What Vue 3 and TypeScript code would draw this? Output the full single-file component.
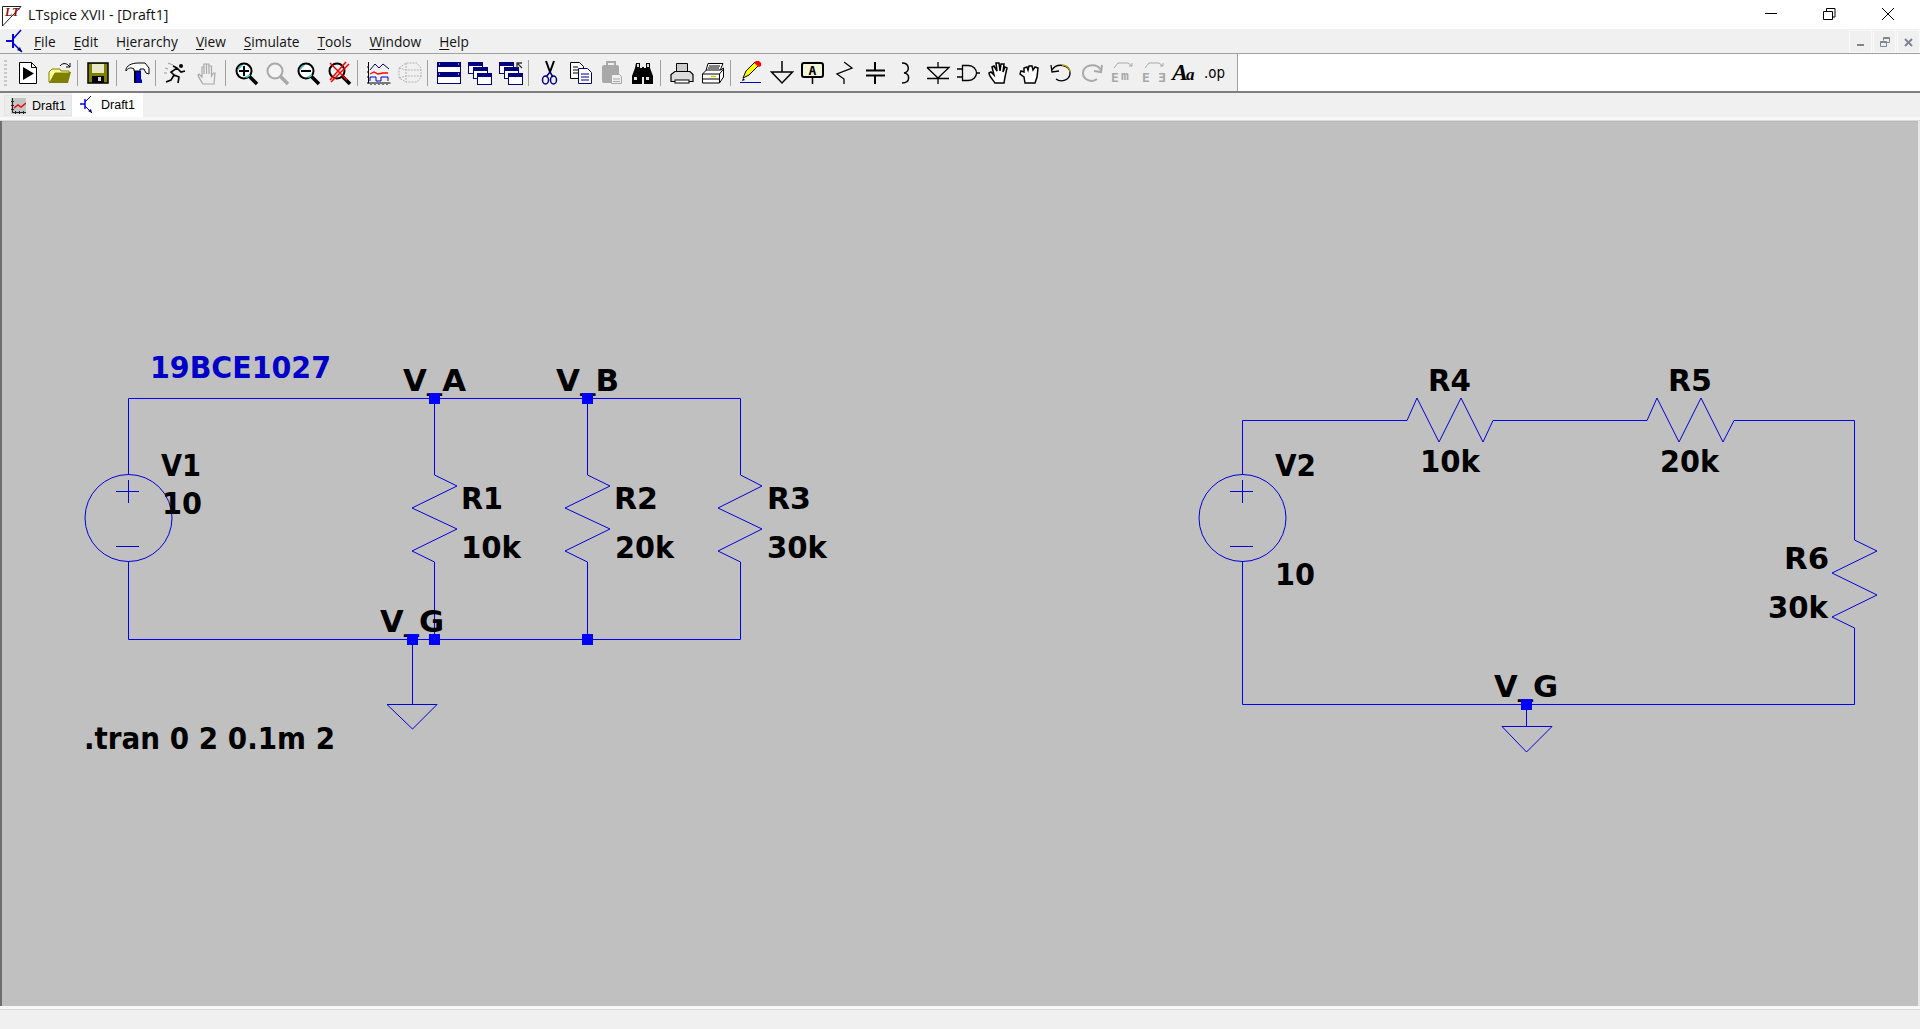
<script setup lang="ts">
interface ToolItem {
  sep?: boolean
  narrow?: boolean
  body?: string
}

interface SchematicLabel {
  text: string
  x: number
  y: number
  w: number
  color?: string
}

const menus = [
  { before: '', key: 'F', after: 'ile' },
  { before: '', key: 'E', after: 'dit' },
  { before: 'H', key: 'i', after: 'erarchy' },
  { before: '', key: 'V', after: 'iew' },
  { before: '', key: 'S', after: 'imulate' },
  { before: '', key: 'T', after: 'ools' },
  { before: '', key: 'W', after: 'indow' },
  { before: '', key: 'H', after: 'elp' },
]

const lens = (stroke: string, fill: string, extra = '') =>
  `<path d="M14 15l8 8" stroke="${stroke}" stroke-width="3.5"/><circle cx="9" cy="10" r="7.5" fill="${fill}" stroke="${stroke}" stroke-width="2"/>${extra}`

const win = (x: number, y: number, w = 14, h = 11) =>
  `<rect x="${x + 0.5}" y="${y + 0.5}" width="${w}" height="${h}" fill="#fff" stroke="#000080"/><rect x="${x}" y="${y}" width="${w + 1}" height="4" fill="#000080"/>`

const line = 'fill="none" stroke="#000"'
const mono = `font-weight="700" fill="#a8a8a8" font-family="'DejaVu Sans Mono',monospace"`

const toolItems: ToolItem[] = [
  { body: `<g transform="translate(-1 0)"><path d="M3.500 1.500h12l5 5v16h-17z" fill="#fff" stroke="#000"/><path d="M15.500 1.500v5h5" ${line}/><path d="M7 6l11 6.500-11 6.500z"/></g>` },
  { body: `<path d="M1 10h3l1-2h7v3h11l-3 11H1z" fill="#808000"/><path d="M1 21V11l3-3h8l1 2h8l0 2H7L2 21z" fill="#ffff99" stroke="#808000"/><path d="M12 5c2-3 6-3 8-1l2 2m0-4v4h-4" ${line}/>` },
  { sep: true },
  { body: `<g transform="translate(-1 0)"><rect x="2" y="2" width="20" height="20" fill="#808000" stroke="#000" stroke-width="1.500"/><rect x="6" y="3" width="12" height="9" fill="#e8e8c8"/><rect x="6" y="15" width="12" height="7"/><rect x="12" y="16" width="3" height="4" fill="#d0d0d0"/></g>` },
  { sep: true },
  { body: `<g transform="translate(-1 0)"><path d="M10 10h6v8l1 1v3H9v-3l1-1z" fill="#0000c0"/><rect x="9" y="10" width="2" height="12"/><path d="M1 8C3 3 9 2 14 2h6l4 5v6l-3-1-2-4h-4v2H9V8C6 6 3 7 1 10z" fill="#fff" stroke="#000"/></g>` },
  { sep: true },
  { body: `<g transform="translate(-2 0)"><circle cx="18" cy="5" r="2"/><path d="M3 21l5-2 3-5-3-3 6-4 4 4 4-1M11 14l5 2-1 6M14 7l-4-2" fill="none" stroke="#000" stroke-width="1.600"/><path d="M5 2l5 2M2 7l3 1M1 12h3" fill="none" stroke="#999"/></g>` },
  { body: `<path d="M7 23c-2-3-4-6-5-9l1-1 3 3V6h2v7V3h2.500v10V3H13v10V5h2.500v10l2-3h1.500l-1 11z" fill="#f0f0f0" stroke="#a8a8a8" stroke-width="1.200"/>` },
  { sep: true },
  { body: lens('#000', '#fff', `<path d="M3 7l3-3 2 0-5 5zM10 16l5-3 0 2-3 2z" fill="#33cccc"/><path d="M9 5v10M4 10h10" stroke="#000" stroke-width="2"/>`) },
  { body: lens('#a8a8a8', '#f4f4f4') },
  { body: lens('#000', '#fff', `<path d="M3 7l3-3 2 0-5 5zM10 16l5-3 0 2-3 2z" fill="#33cccc"/><path d="M4 10h10" stroke="#000" stroke-width="2"/>`) },
  { body: lens('#000', '#e8f8f8', `<path d="M2 2l17 17M18 1L2 19M3 21L21 3" stroke="#f00" stroke-width="1.500"/>`) },
  { sep: true },
  { body: `<path d="M1.500 1v21h22M0 22h2M4 23v1M8 23v1M12 23v1M16 23v1M20 23v1M0 6h2M0 11h2M0 16h2" ${line}/><path d="M3 9l5-6 4 4 4-4 6 5" fill="none" stroke="#000080"/><path d="M3 13l4-2 4 2 5-1 5 0" fill="none" stroke="#f00" stroke-width="1.300"/><path d="M3 20v-4h6v4h5v-4h7v4" fill="none" stroke="#0000c0"/>` },
  { body: `<path d="M1 7l7-5h11l4 5v9l-4 5H8l-7-4zM8 2v19M1 7l7 2h15M1 17l7-2h15" fill="none" stroke="#b4b4b4" stroke-dasharray="2 1"/>` },
  { sep: true },
  { body: `<rect x="0.500" y="1.500" width="23" height="21" fill="#fff" stroke="#000080" stroke-width="1"/><rect x="0" y="1" width="24" height="5" fill="#000080"/><rect x="0" y="11" width="24" height="5" fill="#000080"/><path d="M2 3h1M21 3h1M2 13h1M21 13h1" stroke="#fff"/>` },
  { body: win(0, 1) + win(5, 6) + win(9, 12) },
  { body: win(0, 1) + win(5, 6) + win(9, 12) + `<path d="M18 7V2h5M18 2l5 5" fill="none" stroke="#333" stroke-width="1.300"/>` },
  { sep: true },
  { body: `<path d="M8 0l4 11M16 0l-4 11" stroke="#000" stroke-width="2"/><path d="M12 11l-4 5M12 11l3 5" stroke="#000080" stroke-width="1.500"/><ellipse cx="7.500" cy="19" rx="3" ry="4" fill="none" stroke="#000080" stroke-width="1.500"/><ellipse cx="15.500" cy="19" rx="3" ry="4" fill="none" stroke="#000080" stroke-width="1.500"/>` },
  { body: `<path d="M1.500 1.500h9l4 4v12h-13z" fill="#fff" stroke="#000"/><path d="M4 6h5M4 9h7M4 12h7" stroke="#000"/><path d="M9.500 7.500h9l4 4v11h-13z" fill="#fff" stroke="#000080"/><path d="M12 13h8M12 16h8M12 19h8" stroke="#000080"/>` },
  { body: `<rect x="2" y="4" width="17" height="18" rx="2" fill="#a8a8a8"/><rect x="7" y="1" width="8" height="5" fill="none" stroke="#a8a8a8" stroke-width="2"/><path d="M11.500 13.500h8l2 2v7h-10z" fill="#f0f0f0" stroke="#a8a8a8"/><path d="M13 18h7M13 20.500h7" stroke="#a8a8a8"/>` },
  { body: `<path d="M5 2h4v5h2v-1h2v1h2V2h4v5l3 8v8h-9v-7H11v7H1v-8l3-8z"/><path d="M6 3h2v3H6zM16 3h2v3h-2zM3 16h3v3H3zM15 16h3v3h-3z" fill="#e0e0e0"/>` },
  { sep: true },
  { body: `<path d="M6.500 2.500h11v8h-11z" fill="#ccc" stroke="#000"/><path d="M5 10.500h15l3 3v7H1v-7z" fill="#ddd" stroke="#000" stroke-width="1.200"/><rect x="5" y="19" width="14" height="3" fill="#fff" stroke="#000"/>` },
  { body: `<path d="M7 2.500h15l-3 7H5z" fill="#fff" stroke="#000"/><path d="M8 5h11M7 7h11" stroke="#000"/><path d="M1.500 13l4-4h14l3-2v9l-4 6h-17z" fill="#fff" stroke="#000"/><path d="M1.500 13h17v9M1.500 18h17M18.500 13l4-5" ${line}/><path d="M10 15.500h5" stroke="#cc0" stroke-width="1.500"/>` },
  { sep: true },
  { narrow: true, body: `<path d="M4 17l3-7 9-9 4 3-10 10z" fill="#ffff00" stroke="#000"/><path d="M15 2l2-2h3l2 2v3l-2 1z" fill="#f00"/><path d="M4 17l-1 3 3-1z"/><path d="M1 21.500h21" stroke="#0000c0"/>` },
  { body: `<path d="M12 0v11M1.500 11h21L12 22z" fill="none" stroke="#000" stroke-width="1.500"/>` },
  { body: `<rect x="1" y="2" width="21" height="14" rx="2" fill="#f4f4d8" stroke="#000" stroke-width="2"/><text x="11.500" y="13.500" font-size="13" font-weight="700" text-anchor="middle" font-family="'DejaVu Sans Mono',monospace">A</text><path d="M11.500 16v7" stroke="#000" stroke-width="1.500"/>` },
  { body: `<path d="M12 1l8 6-15 6 7 5v5" fill="none" stroke="#000" stroke-width="1.300"/>` },
  { body: `<path d="M12 1v8M3 9.500h19M3 14.500h19M12 15v8" fill="none" stroke="#000" stroke-width="2"/>` },
  { body: `<path d="M8 2c8 0 8 9 2 10 6 0 7 10-2 10" fill="none" stroke="#000" stroke-width="1.500"/>` },
  { body: `<path d="M13 1v5M2 6.500h22L13 17 2 6.500M2 17.500h22M13 18v5" fill="none" stroke="#000" stroke-width="1.300"/>` },
  { body: `<path d="M6.500 4.500h6c5 0 8 4 8 7.500s-3 7.500-8 7.500h-6zM1 8h5M1 16h5M20 12h4" fill="none" stroke="#000" stroke-width="1.300"/>` },
  { body: `<path d="M8 22c-2-3-6-7-6-10l2-1 3 3-2-8 2-1 3 5-1-8h3l1 8 1-7h3l-1 8 2-5 2 1-2 9-1 6z" fill="#fff" stroke="#000" stroke-width="1.500"/>` },
  { body: `<path d="M7 22l-1-6-4-3 1-3 3 1 0-4 3-1 1 3 1-4 3 0 1 4 2-3 3 1-1 9-2 6z" fill="#fff" stroke="#000" stroke-width="1.500"/>` },
  { body: `<path d="M3 9c5-8 18-5 18 3 0 7-9 10-14 6" fill="none" stroke="#000" stroke-width="1.300"/><path d="M13 4c5 0 8 4 8 7" fill="none" stroke="#b8a000" stroke-width="1.300"/><path d="M2 4l1 7 7-1" fill="none" stroke="#000" stroke-width="1.300"/>` },
  { body: `<path d="M21 9C16 1 3 4 3 12c0 7 9 10 14 6" fill="none" stroke="#a8a8a8" stroke-width="2"/><path d="M22 4l-1 7-7-1" fill="none" stroke="#a8a8a8" stroke-width="2"/>` },
  { body: `<text x="0" y="20.500" font-size="13" ${mono}>E</text><text x="10" y="19" font-size="13" ${mono}>m</text><path d="M3 7l4-5h10l4 3M21 2v3h-3" fill="none" stroke="#a8a8a8"/>` },
  { body: `<text x="0" y="20.500" font-size="13" ${mono}>E</text><text x="-24" y="20.500" transform="scale(-1 1)" font-size="13" ${mono}>E</text><path d="M3 7l4-5h10l4 3M21 2v3h-3" fill="none" stroke="#a8a8a8"/>` },
  { body: `<text x="-1" y="19" font-size="24" font-weight="700" font-style="italic" font-family="'Liberation Serif',serif">A</text><text x="13" y="19" font-size="17" font-style="italic" font-family="'Liberation Serif',serif" font-weight="700">a</text>` },
  { body: `<text x="0" y="17" font-size="16" font-family="'DejaVu Sans',sans-serif" textLength="21" lengthAdjust="spacingAndGlyphs">.op</text>` },
]

const wires = [
  'M128.500 475V398.500H740.500V475',
  'M128.500 561V639.500H740.500V562',
  'M434.500 398V475M434.500 562V639',
  'M587.500 398V475M587.500 562V639',
  'M412.500 639V704',
  'M1407 420.500H1242.500V475M1242.500 561V704.500H1854.500V628',
  'M1493 420.500H1647M1734 420.500H1854.500V540',
  'M1526.500 704V726',
]

const symbols = [
  'M434.500 475L457 486 412 508 457 529 412 551 434.500 562',
  'M587.500 475L610 486 565 508 610 529 565 551 587.500 562',
  'M740.500 475L762 486 718 508 762 529 718 551 740.500 562',
  'M1407 420.500L1417 398 1439 442 1461 398 1483 442 1493 420.500',
  'M1647 420.500L1657 398 1679 442 1701 398 1723 442 1734 420.500',
  'M1854.500 540L1877 551 1832 573 1877 595 1832 617 1854.500 628',
  'M387 704.500H437L412.500 729Z',
  'M1502 726.500H1552L1526.500 752Z',
  'M116 491.500H139M128.500 480V503M116 546.500H139',
  'M1230 491.500H1253M1242.500 480V503M1230 546.500H1253',
]

const sources = [128.5, 1242.5]

const junctions = [
  [434, 398],
  [587, 398],
  [412, 639],
  [434, 639],
  [587, 639],
  [1526, 704],
]

const labels: SchematicLabel[] = [
  { text: '19BCE1027', x: 150, y: 378, w: 181, color: '#0000c8' },
  { text: 'V_A', x: 403, y: 391, w: 63 },
  { text: 'V_B', x: 556, y: 391, w: 63 },
  { text: 'V_G', x: 380, y: 632, w: 64 },
  { text: 'V1', x: 161, y: 476, w: 40 },
  { text: '10', x: 162, y: 514, w: 40 },
  { text: 'R1', x: 461, y: 509, w: 42 },
  { text: '10k', x: 461, y: 558, w: 60 },
  { text: 'R2', x: 614, y: 509, w: 44 },
  { text: '20k', x: 615, y: 558, w: 59 },
  { text: 'R3', x: 767, y: 509, w: 44 },
  { text: '30k', x: 767, y: 558, w: 60 },
  { text: '.tran 0 2 0.1m 2', x: 84, y: 749, w: 251 },
  { text: 'V2', x: 1275, y: 476, w: 41 },
  { text: '10', x: 1275, y: 585, w: 40 },
  { text: 'R4', x: 1428, y: 391, w: 43 },
  { text: '10k', x: 1420, y: 472, w: 60 },
  { text: 'R5', x: 1668, y: 391, w: 44 },
  { text: '20k', x: 1660, y: 472, w: 59 },
  { text: 'R6', x: 1784, y: 569, w: 45 },
  { text: '30k', x: 1768, y: 618, w: 60 },
  { text: 'V_G', x: 1494, y: 697, w: 64 },
]
</script>

<template>
  <div class="app">
    <header class="titlebar">
      <svg class="logo" width="24" height="24" viewBox="0 0 24 24">
        <path d="M2.500 3.500H21L2.500 23z" fill="#fff" stroke="#222" />
        <text x="5" y="13" font-size="12" font-weight="700" font-style="italic" fill="#8b1010" font-family="'Liberation Serif',serif">LT</text>
      </svg>
      <span class="title">LTspice XVII - [Draft1]</span>
      <div class="window-controls">
        <svg width="58" height="29" viewBox="0 0 58 29"><path d="M19 13.500H31" stroke="#000" /></svg>
        <svg width="58" height="29" viewBox="0 0 58 29">
          <path d="M19.500 11.500h9v8h-9zM22.500 11V8.500h8.500V17h-2.500" fill="none" stroke="#000" />
        </svg>
        <svg width="58" height="29" viewBox="0 0 58 29"><path d="M20 8l12 12M32 8L20 20" stroke="#000" /></svg>
      </div>
    </header>

    <nav class="menubar">
      <svg class="menu-icon" width="18" height="24" viewBox="0 0 18 24">
        <path d="M0 12h6M7 5v14" stroke="#0000e0" stroke-width="2" />
        <path d="M7 10l8-9M7 14l9 9" stroke="#0000e0" stroke-width="1.500" />
        <path d="M11 21l5 2-2-5z" fill="#000080" />
      </svg>
      <a v-for="menu in menus" :key="menu.key + menu.after" class="menu-item">{{ menu.before }}<u>{{ menu.key }}</u>{{ menu.after }}</a>
      <div class="mdi-buttons">
        <span class="mdi-button"><svg width="12" height="12"><rect x="2" y="8" width="7" height="2" fill="#7c8590" /></svg></span>
        <span class="mdi-button"><svg width="12" height="12"><path d="M1.500 5.500h6v5h-6zM4.500 4.500v-3h6v5H8M1 6.500h7M4 2.500h7" fill="none" stroke="#7c8590" /></svg></span>
        <span class="mdi-button"><svg width="12" height="12"><path d="M2 3l7 7M9 3l-7 7" stroke="#7c8590" stroke-width="2" /></svg></span>
      </div>
    </nav>

    <div class="toolbar-row">
      <div class="toolbar">
        <span class="grip"></span>
        <template v-for="(item, i) in toolItems" :key="i">
          <span v-if="item.sep" class="separator"></span>
          <span v-else class="tool" :class="{ narrow: item.narrow }">
            <svg width="24" height="24" viewBox="0 0 24 24" v-html="item.body"></svg>
          </span>
        </template>
      </div>
    </div>

    <div class="tabbar">
      <div class="tab">
        <svg width="15" height="16" viewBox="0 0 15 16">
          <rect width="15" height="16" fill="#c4c4c4" />
          <path d="M1.500 0v14.500H15M0 3.500h3M0 7.500h3M0 11.500h3M4.500 13v3M8.500 13v3M12.500 13v3" fill="none" stroke="#222" />
          <path d="M3 10l4-3 3 2 5-4" fill="none" stroke="#e01010" stroke-width="1.500" />
        </svg>
        <span>Draft1</span>
      </div>
      <div class="tab active">
        <svg width="14" height="18" viewBox="0 0 14 18">
          <path d="M0 8h5M5 3v10" stroke="#0000e0" stroke-width="1.500" />
          <path d="M5 6l6-6M5 10l7 7" stroke="#0000e0" />
          <path d="M8 15l4 2-1-4z" fill="#000080" />
        </svg>
        <span>Draft1</span>
      </div>
    </div>

    <main class="canvas">
      <svg class="schematic" width="1916" height="885" viewBox="2 121 1916 885">
        <path v-for="(d, i) in wires" :key="'w' + i" :d="d" class="wire" />
        <path v-for="(d, i) in symbols" :key="'s' + i" :d="d" class="symbol" />
        <circle v-for="cx in sources" :key="cx" :cx="cx" cy="518" r="43.500" class="symbol" />
        <text
          v-for="label in labels"
          :key="label.text + label.x"
          :x="label.x"
          :y="label.y"
          :textLength="label.w"
          :fill="label.color || '#000'"
          lengthAdjust="spacingAndGlyphs"
          class="label"
        ><template v-if="label.text.includes('_')"><tspan>{{ label.text.split('_')[0] }}</tspan><tspan dy="-2">_</tspan><tspan dy="2">{{ label.text.split('_')[1] }}</tspan></template><template v-else>{{ label.text }}</template></text>
        <rect v-for="j in junctions" :key="j[0] + '-' + j[1]" :x="j[0] - 5" :y="j[1] - 5" width="11" height="11" fill="#0000ff" />
      </svg>
    </main>

    <footer class="statusbar"></footer>
  </div>
</template>

<style scoped>
.app {
  display: flex;
  flex-direction: column;
  height: 1029px;
  background: #fff;
  font-family: "Liberation Sans", Arial, sans-serif;
  color: #000;
  overflow: hidden;
}
.titlebar {
  display: flex;
  align-items: center;
  height: 29px;
  flex: none;
  background: #fff;
}
.logo {
  margin-left: 0;
}
.title {
  margin-left: 4px;
  font-family: "Open Sans", sans-serif;
  font-size: 14.2px;
  color: #111;
}
.window-controls {
  display: flex;
  margin-left: auto;
}
.menubar {
  display: flex;
  align-items: center;
  height: 25px;
  flex: none;
  padding-left: 6px;
  background: #f0f0f0;
  border-bottom: 1px solid #a0a0a0;
  box-sizing: border-box;
  font-family: "Open Sans", sans-serif;
  font-size: 13.7px;
  color: #111;
}
.menu-icon {
  margin-right: 1px;
}
.menu-item {
  padding: 0 9px;
}
.menu-item u {
  text-underline-offset: 2px;
}
.mdi-buttons {
  display: flex;
  gap: 1px;
  margin-left: auto;
  align-self: flex-start;
  padding-top: 1px;
}
.mdi-button {
  display: flex;
  align-items: center;
  justify-content: center;
  width: 21px;
  height: 21px;
  border: 1px solid #f9f9f9;
}
.toolbar-row {
  display: flex;
  height: 39px;
  flex: none;
  background: #fff;
  border-bottom: 2px solid #7f7f7f;
  box-sizing: border-box;
}
.toolbar {
  position: relative;
  display: flex;
  align-items: center;
  width: 1238px;
  padding-left: 13px;
  box-sizing: border-box;
  background: #f0f0f0;
  border-right: 1px solid #a0a0a0;
}
.grip {
  position: absolute;
  left: 4px;
  top: 6px;
  width: 3px;
  height: 26px;
  background: repeating-linear-gradient(#c8c8c8 0 2px, transparent 2px 4px);
}
.tool {
  display: flex;
  align-items: center;
  justify-content: center;
  width: 31px;
  height: 37px;
}
.tool.narrow {
  width: 30px;
}
.tool svg {
  overflow: visible;
}
.separator {
  width: 8px;
  height: 26px;
  flex: none;
  position: relative;
}
.separator::before {
  content: "";
  position: absolute;
  left: 2px;
  top: 0;
  width: 1px;
  height: 100%;
  background: #a0a0a0;
}
.tabbar {
  display: flex;
  align-items: flex-end;
  height: 28px;
  flex: none;
  padding: 0 0 4px 4px;
  box-sizing: border-box;
  background: #f0f0f0;
  border-bottom: 1px solid #dcdcdc;
  box-shadow: inset 0 -3px 0 #f8f8f8;
  font-size: 12.5px;
}
.tab {
  display: flex;
  align-items: center;
  gap: 6px;
  width: 68px;
  height: 21px;
  padding-left: 6px;
  box-sizing: border-box;
  background: #ececec;
  border: 1px solid #e4e4e4;
}
.tab.active {
  width: 71px;
  height: 24px;
  gap: 7px;
  padding-left: 8px;
  margin-bottom: -1px;
  background: #fff;
  border: none;
}
.canvas {
  flex: 1;
  min-height: 0;
  display: flex;
  background: #c0c0c0;
  border-left: 2px solid #6e6e6e;
  border-right: 2px solid #e8e8e8;
  box-shadow: inset 0 1px 0 #b8b8b8;
}
.schematic {
  display: block;
}
.wire {
  fill: none;
  stroke: #0000ff;
  stroke-width: 1;
}
.symbol {
  fill: none;
  stroke: #0000d8;
  stroke-width: 1;
}
.label {
  font-family: "DejaVu Sans", sans-serif;
  font-weight: 700;
  font-size: 30px;
}
.statusbar {
  height: 23px;
  flex: none;
  box-sizing: border-box;
  background: #f0f0f0;
  border-top: 3px solid #f8f8f8;
  box-shadow: inset 0 1px 0 #d8d8d8;
}
</style>
